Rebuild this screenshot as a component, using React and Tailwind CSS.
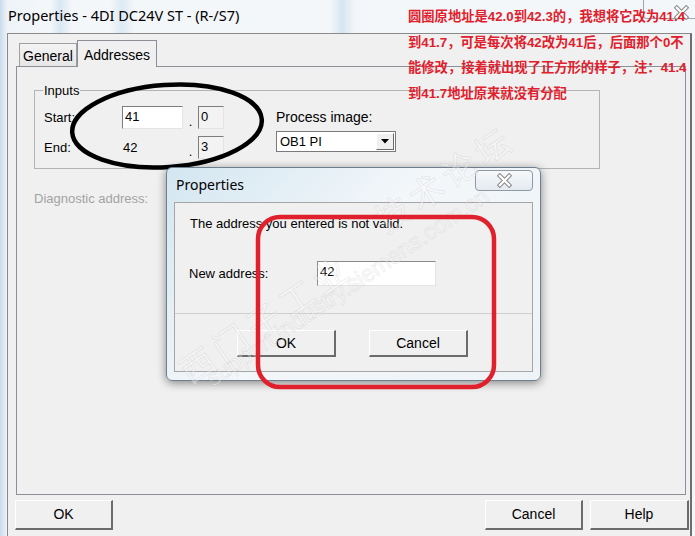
import React from 'react';

const Btn = ({ children, className = '' }) => (
  <div
    className={`flex items-center justify-center bg-[#f0f0f0] border-t border-l border-t-white border-l-white border-r-2 border-b-2 border-r-[#6b6b6b] border-b-[#6b6b6b] text-[14px] text-black ${className}`}
  >
    {children}
  </div>
);

const Field = ({ value, className = '' }) => (
  <div
    className={`h-[23px] border border-t-[#7d7d7d] border-l-[#7d7d7d] border-r-[#e4e4e4] border-b-[#e4e4e4] pl-[2px] pt-[1px] leading-[18px] text-[13px] ${className}`}
  >
    {value}
  </div>
);

const GlassX = ({ size = 16 }) => (
  <svg width={size} height={size} viewBox="0 0 16 16">
    <path d="M3 3 L13 13 M13 3 L3 13" stroke="#8a8a8a" strokeWidth="4.6" strokeLinecap="square" />
    <path d="M3 3 L13 13 M13 3 L3 13" stroke="#ffffff" strokeWidth="2.4" strokeLinecap="square" />
  </svg>
);

export default function App() {
  return (
    <div className="relative w-[695px] h-[536px] overflow-hidden bg-[linear-gradient(90deg,#c9dcec_0px,#eef3f8_7px,#f4f7fa_50px,#d9e7f2_60px,#f4f7fa_72px,#f4f7fa_110px,#dde9f3_122px,#f4f7fa_135px,#f4f7fa_330px,#d6e5f1_342px,#f4f7fa_356px)] font-['Liberation_Sans',Arial,sans-serif] text-black">
      {/* title bar */}
      <div className="h-[33px] flex items-center justify-between pl-[8px]">
        <span className="text-[14.5px] font-['Noto_Sans',sans-serif] text-black pb-[1px]">
          Properties - 4DI DC24V ST - (R-/S7)
        </span>
        <div className="self-start w-[52px] h-[19px] border-l border-b border-[#9aa6b2] rounded-bl-[4px] flex items-center justify-center pl-[24px] pt-[6px]">
          <GlassX size={15} />
        </div>
      </div>

      {/* client area */}
      <div className="ml-[7px] mr-[3px] h-[503px] border-l border-t border-r-2 border-l-[#8a8a8a] border-t-[#8a8a8a] border-r-[#6e6e6e] bg-[#f0f0f0] flex flex-col">
        {/* tabs */}
        <div className="mt-[6px] h-[26px] pl-[11px] flex items-end relative z-10">
          <div className="h-[23px] w-[58px] border border-b-0 border-[#a0a0a0] bg-[linear-gradient(#f3f3f3,#e6e6e6)] flex items-center justify-center text-[14px] pt-[2px]">
            General
          </div>
          <div className="h-[27px] -mb-px w-[80px] border border-b-0 border-[#8c8f96] bg-[#f0f0f0] flex items-start justify-center text-[14px] pt-[4px]">
            Addresses
          </div>
        </div>

        {/* tab page */}
        <div className="ml-[8px] mr-[4px] h-[429px] border border-[#8c8f96] bg-[#f0f0f0] text-[13px]">
          <fieldset className="ml-[17px] mt-[16px] w-[566px] border border-[#b4b4b4] pl-[9px] pb-[9px]">
            <legend className="-ml-[1px] px-[1px] leading-[15px] text-[13px]">Inputs</legend>
            <div className="flex pt-[8px]">
              <div className="flex flex-col gap-[7px]">
                <div className="flex items-center">
                  <span className="w-[78px]">Start:</span>
                  <Field value="41" className="w-[61px] bg-white" />
                  <span className="w-[15px] self-end text-center leading-[14px]">.</span>
                  <Field value="0" className="w-[26px] bg-[#f3f3f3]" />
                </div>
                <div className="flex items-center">
                  <span className="w-[78px]">End:</span>
                  <span className="w-[61px] pl-[1px]">42</span>
                  <span className="w-[15px] self-end text-center leading-[14px]">.</span>
                  <Field value="3" className="w-[26px] bg-[#f3f3f3]" />
                </div>
              </div>
              <div className="ml-[52px] flex flex-col">
                <span className="text-[14px] leading-[16px] mt-[3px]">Process image:</span>
                <div className="mt-[6px] w-[120px] h-[21px] border border-[#7a7a7a] bg-white flex items-center">
                  <span className="flex-1 pl-[3px] text-[13px]">OB1 PI</span>
                  <div className="w-[18px] h-[17px] mr-[1px] bg-[#f0f0f0] border-t border-l border-t-white border-l-white border-r border-b border-r-[#6b6b6b] border-b-[#6b6b6b] flex items-center justify-center">
                    <svg width="8" height="5" viewBox="0 0 8 5">
                      <path d="M0 0 H8 L4 4.5 Z" fill="#000" />
                    </svg>
                  </div>
                </div>
              </div>
            </div>
          </fieldset>
          <div className="ml-[17px] mt-[20px] text-[13px] text-[#a3a3a3]">Diagnostic address:</div>
        </div>

        {/* bottom buttons */}
        <div className="mt-[5px] flex items-center pl-[7px] pr-[1px]">
          <Btn className="w-[98px] h-[30px]">OK</Btn>
          <div className="flex-1" />
          <Btn className="w-[98px] h-[30px]">Cancel</Btn>
          <Btn className="ml-[7px] w-[99px] h-[30px]">Help</Btn>
        </div>
      </div>

      {/* black ellipse annotation */}
      <svg className="absolute left-0 top-0 pointer-events-none" width="695" height="536">
        <ellipse cx="167" cy="126" rx="95" ry="41" fill="none" stroke="#000" strokeWidth="4.5" transform="rotate(-4 167 126)" />
      </svg>

      {/* modal dialog */}
      <div className="absolute left-[166px] top-[167px] w-[375px] h-[214px] rounded-[6px] border border-[#6f7f8e] bg-[linear-gradient(135deg,#d3e6f1,#f3f7fa_45%,#eef3f7)] shadow-[0_2px_10px_rgba(0,0,0,0.45)] flex flex-col">
        <div className="h-[34px] flex items-start justify-between pl-[9px] pr-[7px]">
          <span className="mt-[7px] text-[14px] font-['Noto_Sans',sans-serif] leading-[20px]">Properties</span>
          <div className="mt-[2px] w-[58px] h-[21px] border border-[#8d99a4] rounded-[4px] bg-[linear-gradient(#f7f9fb,#e3eaf0)] flex items-center justify-center">
            <GlassX size={15} />
          </div>
        </div>
        <div className="mx-[7px] h-[170px] border border-[#a5a5a5] bg-[#f0f0f0] flex flex-col text-[13px]">
          <div className="pl-[15px] pt-[13px] leading-[16px]">The address you entered is not valid.</div>
          <div className="mt-[29px] pl-[14px] flex items-center">
            <span className="w-[128px]">New address:</span>
            <div className="w-[119px] h-[25px] bg-white border border-t-[#8a8a8a] border-l-[#8a8a8a] border-r-[#e4e4e4] border-b-[#e4e4e4] pl-[2px] pt-[1px] leading-[18px]">
              42
            </div>
          </div>
          <div className="mt-[27px] border-t border-[#cfcfcf]" />
          <div className="mt-[16px] pl-[62px] flex gap-[33px]">
            <Btn className="w-[99px] h-[27px]">OK</Btn>
            <Btn className="w-[99px] h-[27px]">Cancel</Btn>
          </div>
        </div>
      </div>

      {/* watermark */}
      <div className="absolute left-[165px] top-[292px] -rotate-[34deg] text-[34px] font-['Noto_Sans_CJK_SC',sans-serif] text-white/35 [-webkit-text-stroke:1px_rgba(150,150,150,0.16)] tracking-[6px] pointer-events-none">
        西门子工业
      </div>
      <div className="absolute left-[364px] top-[152px] -rotate-[34deg] text-[34px] font-['Noto_Sans_CJK_SC',sans-serif] text-white/35 [-webkit-text-stroke:1px_rgba(150,150,150,0.16)] tracking-[6px] pointer-events-none">
        技术论坛
      </div>
      <div className="absolute left-[180px] top-[270px] -rotate-[34deg] text-[23px] font-['Liberation_Sans',sans-serif] text-white/35 [-webkit-text-stroke:1px_rgba(150,150,150,0.16)] pointer-events-none">
        support.industry.siemens.com.cn
      </div>

      {/* red rounded rect annotation */}
      <svg className="absolute left-0 top-0 pointer-events-none" width="695" height="536">
        <rect x="258" y="217" width="236" height="170" rx="22" fill="none" stroke="#e0202c" strokeWidth="4.5" />
      </svg>

      {/* red note */}
      <div className="absolute left-[408px] top-[4px] text-[13.3px] leading-[25.5px] font-bold text-[#e0202c] font-['Liberation_Sans','Noto_Sans_CJK_SC',sans-serif] whitespace-nowrap">
        <div>圆圈原地址是42.0到42.3的，我想将它改为41.4</div>
        <div>到41.7，可是每次将42改为41后，后面那个0不</div>
        <div>能修改，接着就出现了正方形的样子，注：41.4</div>
        <div>到41.7地址原来就没有分配</div>
      </div>
    </div>
  );
}
